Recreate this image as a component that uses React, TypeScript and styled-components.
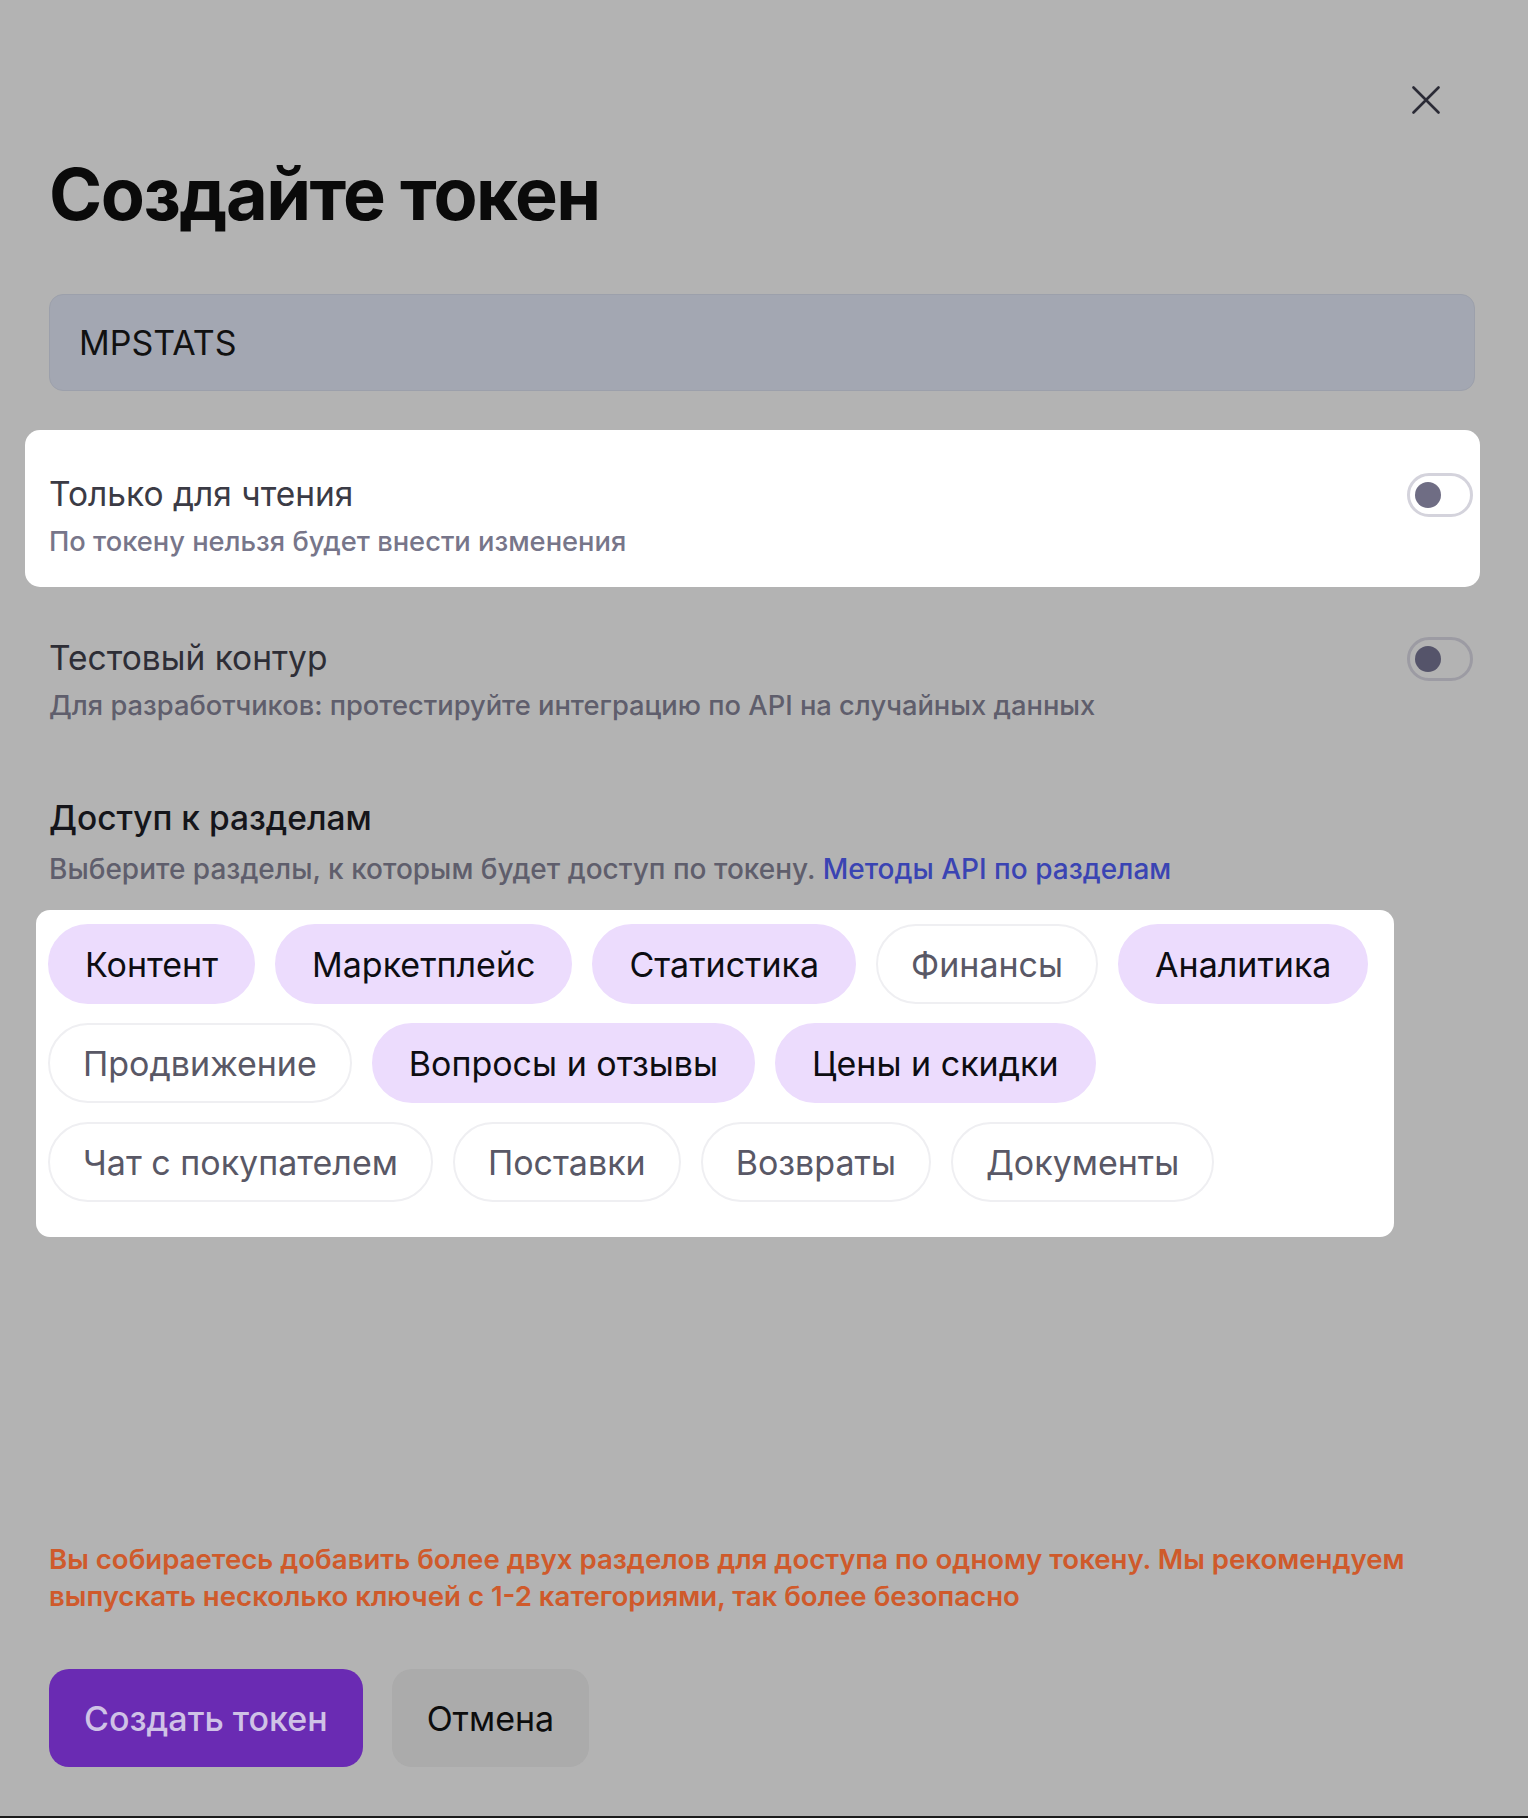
import styled, { createGlobalStyle } from "styled-components";

const GlobalStyle = createGlobalStyle`
  html, body {
    margin: 0;
    padding: 0;
    background: #b3b3b3;
  }
  body {
    font-family: Inter, "Noto Sans", sans-serif;
    color: #111;
  }
`;

const Page = styled.div`
  box-sizing: border-box;
  min-height: 1818px;
  padding: 86px 53px 0 49px;
  border-bottom: 2px solid #1c1c1c;
  display: flex;
  flex-direction: column;
`;

const Header = styled.div`
  display: flex;
  justify-content: flex-end;
  padding-right: 35px;
`;

const CloseButton = styled.button`
  width: 28px;
  height: 28px;
  padding: 0;
  border: none;
  background: none;
  cursor: pointer;
  display: flex;
`;

const Title = styled.h1`
  margin: 37px 0 0;
  font-size: 72px;
  line-height: 86px;
  font-weight: 700;
  letter-spacing: -1.5px;
  color: #0a0a0a;
`;

const NameInput = styled.div`
  box-sizing: border-box;
  margin-top: 57px;
  height: 97px;
  display: flex;
  align-items: center;
  padding: 0 29px;
  border: 1px solid #9ca0ab;
  border-radius: 14px;
  background: #a3a7b2;
  font-size: 34px;
  color: #111;
`;

const Option = styled.div<{ $lit?: boolean }>`
  display: flex;
  justify-content: space-between;
  align-items: flex-start;
  margin: ${(p) => (p.$lit ? "39px -5px 0 -24px" : "50px 2px 0 0")};
  padding: ${(p) => (p.$lit ? "43px 7px 27px 24px" : "0")};
  border-radius: 15px;
  background: ${(p) => (p.$lit ? "#ffffff" : "transparent")};
`;

const OptionText = styled.div`
  display: flex;
  flex-direction: column;
  gap: 10px;
  padding-top: 1px;
`;

const Label = styled.div<{ $lit?: boolean }>`
  font-size: 33.5px;
  line-height: 40px;
  color: ${(p) => (p.$lit ? "#3b3b45" : "#2e2e36")};
`;

const Hint = styled.div<{ $lit?: boolean; $wide?: boolean }>`
  font-size: ${(p) => (p.$wide ? "28px" : "27.3px")};
  line-height: 36px;
  font-weight: 500;
  color: ${(p) => (p.$lit ? "#77768a" : "#5f5e6c")};
`;

const Switch = styled.div<{ $lit?: boolean }>`
  box-sizing: border-box;
  flex: none;
  width: 66px;
  height: 44px;
  border-radius: 22px;
  border: 3px solid ${(p) => (p.$lit ? "#d4d3dc" : "#9c9ba3")};
  display: flex;
  align-items: center;
  padding-left: 5px;
`;

const Knob = styled.span<{ $lit?: boolean }>`
  width: 26px;
  height: 26px;
  border-radius: 50%;
  background: ${(p) => (p.$lit ? "#6f6d84" : "#55546a")};
`;

const Section = styled.div`
  margin-top: 74px;
  display: flex;
  flex-direction: column;
  gap: 13px;
`;

const SectionTitle = styled.div`
  font-size: 33.5px;
  line-height: 40px;
  font-weight: 500;
  color: #15151a;
`;

const Link = styled.a`
  color: #3a44b3;
  text-decoration: none;
`;

const ChipBox = styled.div`
  box-sizing: border-box;
  width: 1358px;
  margin: 23px 0 0 -13px;
  padding: 14px 12px 35px;
  background: #ffffff;
  border-radius: 14px;
  display: flex;
  flex-wrap: wrap;
  column-gap: 20px;
  row-gap: 19px;
`;

const Chip = styled.button<{ $on?: boolean }>`
  box-sizing: border-box;
  height: 80px;
  padding: 0 ${(p) => (p.$on ? "35px" : "33px")};
  border-radius: 40px;
  border: 2px solid ${(p) => (p.$on ? "#ecdcfd" : "#efeff2")};
  background: ${(p) => (p.$on ? "#ecdcfd" : "#ffffff")};
  color: ${(p) => (p.$on ? "#0d0d12" : "#595866")};
  font-family: Inter, "Noto Sans", sans-serif;
  font-size: 34px;
  cursor: pointer;
`;

const Warning = styled.p`
  margin: 304px 0 0;
  font-size: 27.6px;
  line-height: 37px;
  font-weight: 600;
  color: #cf5a2b;
  max-width: 1410px;
`;

const Actions = styled.div`
  margin-top: 54px;
  display: flex;
  gap: 29px;
`;

const Button = styled.button<{ $primary?: boolean }>`
  height: 98px;
  padding: 0 35px;
  border: none;
  border-radius: 20px;
  background: ${(p) => (p.$primary ? "#6a2bb3" : "#ababab")};
  color: ${(p) => (p.$primary ? "#cfc2e6" : "#0d0d0d")};
  font-family: Inter, "Noto Sans", sans-serif;
  font-size: 34px;
  font-weight: ${(p) => (p.$primary ? 500 : 400)};
  cursor: pointer;
`;

const sections = [
  { name: "Контент", on: true },
  { name: "Маркетплейс", on: true },
  { name: "Статистика", on: true },
  { name: "Финансы", on: false },
  { name: "Аналитика", on: true },
  { name: "Продвижение", on: false },
  { name: "Вопросы и отзывы", on: true },
  { name: "Цены и скидки", on: true },
  { name: "Чат с покупателем", on: false },
  { name: "Поставки", on: false },
  { name: "Возвраты", on: false },
  { name: "Документы", on: false },
];

export default function App() {
  return (
    <>
      <GlobalStyle />
      <Page>
        <Header>
          <CloseButton aria-label="Закрыть">
            <svg width="28" height="28" viewBox="0 0 28 28">
              <path
                d="M1.5 1.5 L26.5 26.5 M26.5 1.5 L1.5 26.5"
                stroke="#2b2b36"
                strokeWidth="2.6"
                strokeLinecap="round"
              />
            </svg>
          </CloseButton>
        </Header>

        <Title>Создайте токен</Title>

        <NameInput>MPSTATS</NameInput>

        <Option $lit>
          <OptionText>
            <Label $lit>Только для чтения</Label>
            <Hint $lit>По токену нельзя будет внести изменения</Hint>
          </OptionText>
          <Switch $lit>
            <Knob $lit />
          </Switch>
        </Option>

        <Option>
          <OptionText>
            <Label>Тестовый контур</Label>
            <Hint>
              Для разработчиков: протестируйте интеграцию по API на случайных
              данных
            </Hint>
          </OptionText>
          <Switch>
            <Knob />
          </Switch>
        </Option>

        <Section>
          <SectionTitle>Доступ к разделам</SectionTitle>
          <Hint $wide>
            Выберите разделы, к которым будет доступ по токену.{" "}
            <Link href="#">Методы API по разделам</Link>
          </Hint>
        </Section>

        <ChipBox>
          {sections.map((s) => (
            <Chip key={s.name} $on={s.on}>
              {s.name}
            </Chip>
          ))}
        </ChipBox>

        <Warning>
          Вы собираетесь добавить более двух разделов для доступа по одному
          токену. Мы рекомендуем выпускать несколько ключей с 1-2 категориями,
          так более безопасно
        </Warning>

        <Actions>
          <Button $primary>Создать токен</Button>
          <Button>Отмена</Button>
        </Actions>
      </Page>
    </>
  );
}
